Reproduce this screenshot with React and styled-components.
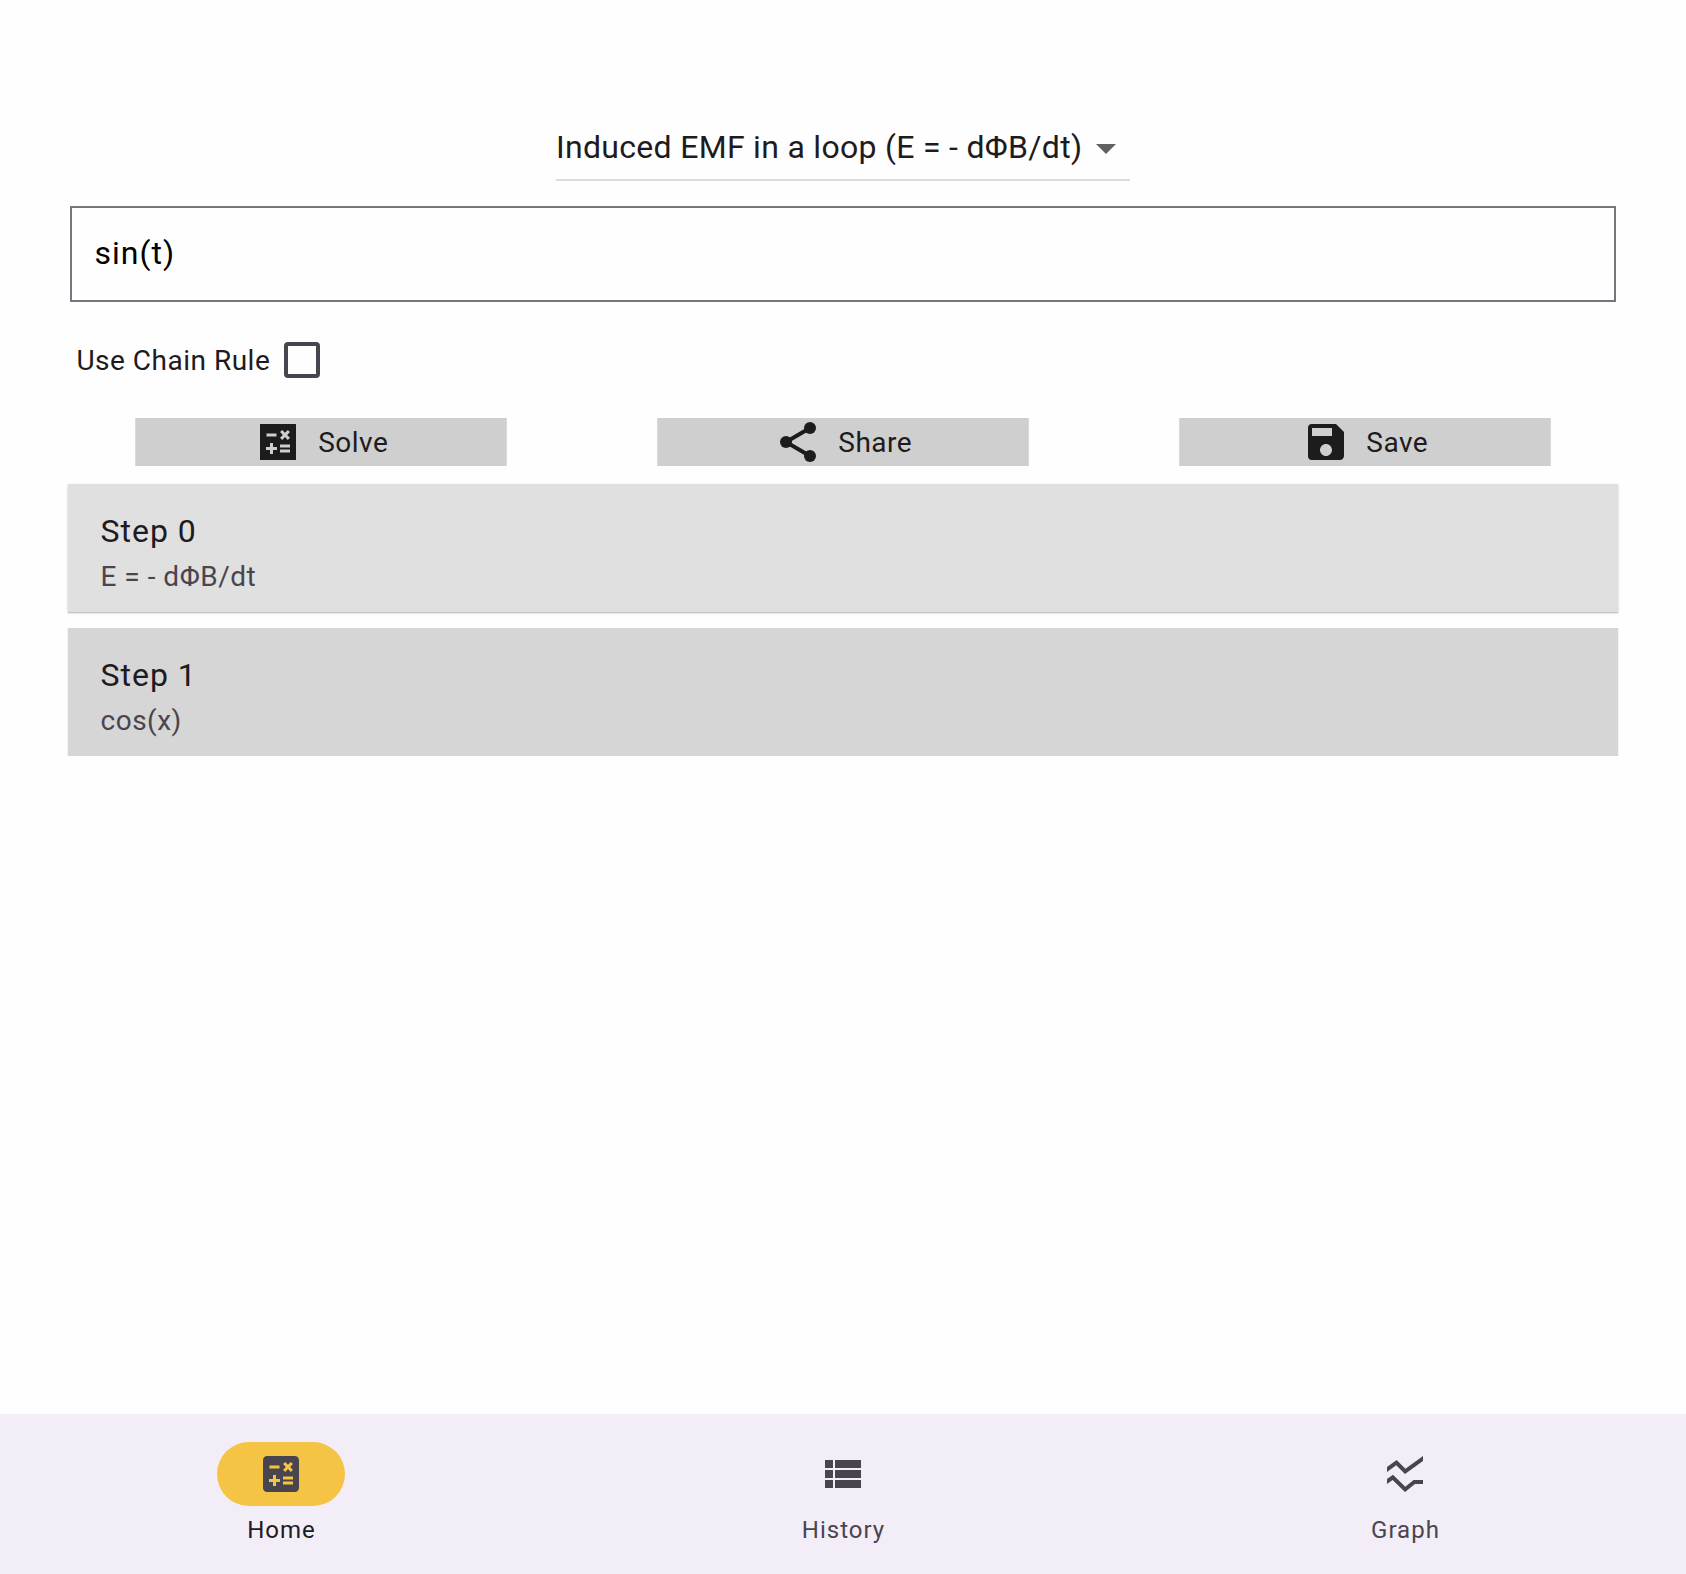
import React, { useState } from "react";
import styled, { createGlobalStyle } from "styled-components";
import { MdArrowDropDown, MdCalculate, MdSave, MdSsidChart, MdViewList } from "react-icons/md";

const GlobalStyle = createGlobalStyle`
  * { box-sizing: border-box; }
  body {
    margin: 0;
    background: #fefefe;
    font-family: Roboto, "Noto Sans", sans-serif;
    color: #1d1b20;
  }
`;

const Screen = styled.div`
  height: 1574px;
  display: flex;
  flex-direction: column;
`;

const Content = styled.main`
  flex: 1;
  display: flex;
  flex-direction: column;
  align-items: center;
  padding-top: 116px;
`;

const Dropdown = styled.button`
  display: flex;
  align-items: center;
  width: 574px;
  height: 65px;
  padding: 0;
  border: 0;
  border-bottom: 2px solid #dcdcdc;
  background: none;
  color: inherit;
  font: 400 32px/48px Roboto, "Noto Sans", sans-serif;
  letter-spacing: 0.3px;
  white-space: nowrap;

  span { flex: 1; min-width: 0; padding-bottom: 2px; text-align: left; }
  svg { flex: none; width: 48px; height: 48px; color: #616161; }
`;

const ExpressionInput = styled.input`
  width: 1546px;
  height: 96px;
  margin-top: 25px;
  padding: 0 22px 2px 22.5px;
  border: 2px solid #79747e;
  border-radius: 0;
  outline: none;
  background: transparent;
  color: #000;
  font: 400 32px/48px Roboto, "Noto Sans", sans-serif;
  letter-spacing: 1px;
`;

const OptionRow = styled.label`
  align-self: flex-start;
  display: flex;
  align-items: center;
  gap: 13.5px;
  height: 36px;
  margin: 40px 0 0 76.4px;
  font-size: 28px;
  line-height: 36px;
  letter-spacing: 0.5px;

  span { padding-top: 2px; }
`;

const Checkbox = styled.input`
  appearance: none;
  width: 36px;
  height: 36px;
  margin: 0;
  border: 4px solid #49454f;
  border-radius: 4px;
`;

const Actions = styled.div`
  display: flex;
  justify-content: space-around;
  width: 1566px;
  margin-top: 40px;
`;

const ActionButton = styled.button`
  display: flex;
  align-items: center;
  justify-content: center;
  gap: 16.5px;
  width: 372px;
  height: 48px;
  padding: 0;
  border: solid #dadada;
  border-width: 0 1px;
  background: #cfcfcf;
  color: #1d1b20;
  font: 400 28px/40px Roboto, "Noto Sans", sans-serif;
  letter-spacing: 0.5px;

  svg { width: 48px; height: 48px; color: #1c1c1c; }
  span { padding-top: 2px; }
`;

const Steps = styled.div`
  display: flex;
  flex-direction: column;
  gap: 16px;
  width: 1550px;
  margin-top: 18px;
`;

const StepCard = styled.section`
  height: 128px;
  padding: 23px 32px 0 32.5px;
  background: ${({ $tone }) => $tone};
  box-shadow: ${({ $raised }) =>
    $raised ? "0 1px 1px rgba(0,0,0,.16), 0 1px 3px rgba(0,0,0,.14)" : "0 0 2px rgba(0,0,0,.12)"};
  clip-path: ${({ $raised }) => ($raised ? "none" : "inset(0 -4px 0 -4px)")};
`;

const StepTitle = styled.h2`
  margin: 0;
  font-weight: 400;
  font-size: 32px;
  line-height: 48px;
  letter-spacing: 1px;
`;

const StepBody = styled.p`
  margin: 2px 0 0;
  color: #49454f;
  font-size: 28px;
  line-height: 40px;
  letter-spacing: 0.5px;
`;

const NavBar = styled.nav`
  display: grid;
  grid-template-columns: repeat(3, 1fr);
  height: 160px;
  background: #f3edf7;
`;

const NavItem = styled.a`
  display: flex;
  flex-direction: column;
  align-items: center;
  gap: 8px;
  padding-top: 28px;
  color: ${({ $active }) => ($active ? "#1d1b20" : "#49454f")};
  font-size: 24px;
  line-height: 32px;
  letter-spacing: 1px;
`;

const Indicator = styled.span`
  display: flex;
  align-items: center;
  justify-content: center;
  width: 128px;
  height: 64px;
  border-radius: 32px;
  background: ${({ $active }) => ($active ? "#f6c445" : "transparent")};

  svg { width: 48px; height: 48px; color: #49454f; }
`;

const NavLabel = styled.span`
  padding-left: 1px;
`;

const SolveIcon = () => (
  <svg viewBox="0 0 24 24" fill="currentColor">
    <path d="M21 3H3v18h18V3zM13.03 7.06 14.09 6l1.41 1.41L16.91 6l1.06 1.06-1.41 1.41 1.41 1.41-1.06 1.06-1.41-1.4-1.41 1.41-1.06-1.06 1.41-1.41-1.41-1.42zM6.25 7.72h5v1.5h-5v-1.5zM11.5 16h-2v2H8v-2H6v-1.5h2v-2h1.5v2h2V16zm6.5 1.25h-5v-1.5h5v1.5zm0-2.5h-5v-1.5h5v1.5z" />
  </svg>
);

const ShareIcon = () => (
  <svg viewBox="0 0 24 24" fill="currentColor">
    <path d="M18 5 6 12l12 7" fill="none" stroke="currentColor" strokeWidth="2" />
    <circle cx="18" cy="5" r="3" />
    <circle cx="6" cy="12" r="3" />
    <circle cx="18" cy="19" r="3" />
  </svg>
);

const actions = [
  { label: "Solve", Icon: SolveIcon },
  { label: "Share", Icon: ShareIcon },
  { label: "Save", Icon: MdSave },
];

const steps = [
  { title: "Step 0", body: "E = - dΦB/dt", tone: "#e0e0e0", raised: true },
  { title: "Step 1", body: "cos(x)", tone: "#d6d6d6", raised: false },
];

const tabs = [
  { label: "Home", Icon: MdCalculate },
  { label: "History", Icon: MdViewList },
  { label: "Graph", Icon: MdSsidChart },
];

export default function App() {
  const [expression, setExpression] = useState("sin(t)");
  const [tab, setTab] = useState("Home");

  return (
    <Screen>
      <GlobalStyle />
      <Content>
        <Dropdown>
          <span>Induced EMF in a loop (E = - dΦB/dt)</span>
          <MdArrowDropDown />
        </Dropdown>
        <ExpressionInput value={expression} onChange={(e) => setExpression(e.target.value)} />
        <OptionRow>
          <span>Use Chain Rule</span>
          <Checkbox type="checkbox" />
        </OptionRow>
        <Actions>
          {actions.map(({ label, Icon }) => (
            <ActionButton key={label}>
              <Icon />
              <span>{label}</span>
            </ActionButton>
          ))}
        </Actions>
        <Steps>
          {steps.map(({ title, body, tone, raised }) => (
            <StepCard key={title} $tone={tone} $raised={raised}>
              <StepTitle>{title}</StepTitle>
              <StepBody>{body}</StepBody>
            </StepCard>
          ))}
        </Steps>
      </Content>
      <NavBar>
        {tabs.map(({ label, Icon }) => (
          <NavItem key={label} $active={tab === label} onClick={() => setTab(label)}>
            <Indicator $active={tab === label}>
              <Icon />
            </Indicator>
            <NavLabel>{label}</NavLabel>
          </NavItem>
        ))}
      </NavBar>
    </Screen>
  );
}
